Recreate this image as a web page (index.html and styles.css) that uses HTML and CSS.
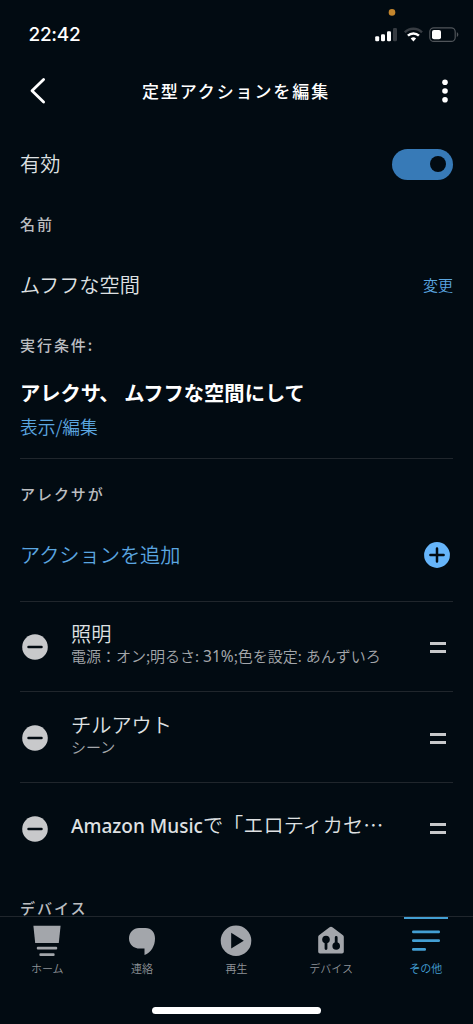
FILE: index.html
```html
<!DOCTYPE html>
<html lang="ja">
<head>
<meta charset="utf-8">
<title>定型アクションを編集</title>
<link rel="stylesheet" href="styles.css">
</head>
<body>
<div class="screen">
  <div class="status">
    <span class="time">22:42</span>
    <svg class="status-icons" width="96" height="48" viewBox="0 0 96 48">
      <circle cx="23" cy="12.4" r="3.3" fill="#c4862d"/>
      <g fill="#fff">
        <rect x="6.2" y="36.3" width="4" height="5" rx="1.2"/>
        <rect x="12" y="34.2" width="4" height="7.1" rx="1.2"/>
        <rect x="18" y="31.2" width="4" height="10.1" rx="1.2"/>
        <rect x="24" y="28" width="4" height="13.3" rx="1.2" fill="#373c42"/>
      </g>
      <g fill="none" stroke-width="2.5">
        <path d="M35.8 32.3a12.4 12.4 0 0 1 17.2 0" stroke="#373c42"/>
        <path d="M38.9 35.7a8 8 0 0 1 11 0" stroke="#fff"/>
      </g>
      <path d="M44.4 41.4l-2.7-2.8a4 4 0 0 1 5.4 0z" fill="#fff"/>
      <rect x="60.8" y="27.8" width="25.4" height="13.6" rx="4" fill="none" stroke="#50555a" stroke-width="1.2"/>
      <rect x="63" y="30" width="9" height="9.2" rx="2" fill="#fff"/>
      <path d="M87.8 32.3c2 .6 2 4 0 4.6z" fill="#50555a"/>
    </svg>
  </div>

  <header class="header">
    <svg width="18" height="30" viewBox="0 0 18 30" fill="none" stroke="#fff" stroke-width="2.8" stroke-linecap="round" stroke-linejoin="round"><path d="M15.6 3.500L4 14.800L15.6 26"/></svg>
    <h1 class="title">定型アクションを編集</h1>
    <svg width="8" height="26" viewBox="0 0 8 26" fill="#fff"><circle cx="4" cy="4.2" r="2.8"/><circle cx="4" cy="13" r="2.8"/><circle cx="4" cy="21.8" r="2.8"/></svg>
  </header>

  <main class="content">
    <section class="row row-enabled">
      <span class="text">有効</span>
      <span class="toggle"><span class="knob"></span></span>
    </section>
    <h2 class="label label-name">名前</h2>
    <section class="row row-name">
      <span class="text">ムフフな空間</span>
      <a class="change">変更</a>
    </section>
    <h2 class="label label-when">実行条件:</h2>
    <section class="trigger">
      <p class="phrase">アレクサ、 ムフフな空間にして</p>
      <a class="edit">表示/編集</a>
    </section>
    <h2 class="label label-alexa">アレクサが</h2>
    <section class="row row-add">
      <a class="text link">アクションを追加</a>
      <svg width="30" height="30" viewBox="0 0 30 30"><circle cx="15" cy="15" r="12.9" fill="#66b5fa"/><path d="M8.4 15h13.2M15 8.4v13.2" stroke="#020b12" stroke-width="2.5" stroke-linecap="round"/></svg>
    </section>
    <section class="action">
      <svg class="minus" width="30" height="30" viewBox="0 0 30 30"><circle cx="15" cy="15" r="12.8" fill="#c8c9cb"/><path d="M8.5 15h13" stroke="#020b12" stroke-width="2.5" stroke-linecap="round"/></svg>
      <div class="info"><p class="text">照明</p><p class="sub">電源：オン;明るさ: <span class="num">31%</span>;色を設定: あんずいろ</p></div>
      <span class="handle"></span>
    </section>
    <section class="action">
      <svg class="minus" width="30" height="30" viewBox="0 0 30 30"><circle cx="15" cy="15" r="12.8" fill="#c8c9cb"/><path d="M8.5 15h13" stroke="#020b12" stroke-width="2.5" stroke-linecap="round"/></svg>
      <div class="info"><p class="text">チルアウト</p><p class="sub">シーン</p></div>
      <span class="handle"></span>
    </section>
    <section class="action last">
      <svg class="minus" width="30" height="30" viewBox="0 0 30 30"><circle cx="15" cy="15" r="12.8" fill="#c8c9cb"/><path d="M8.5 15h13" stroke="#020b12" stroke-width="2.5" stroke-linecap="round"/></svg>
      <div class="info"><p class="text"><span class="latin">Amazon Music</span>で「エロティカセ…</p></div>
      <span class="handle"></span>
    </section>
    <h2 class="label label-device">デバイス</h2>
  </main>

  <nav class="tabs">
    <a class="tab">
      <svg width="32" height="36" viewBox="0 0 32 36" fill="#a3a6ab"><path d="M2.4 1.8h27.2L27.8 19H4.2z"/><rect x="5.8" y="22.8" width="20.4" height="2.7" rx="1"/><rect x="8.4" y="29.2" width="15.2" height="2.7" rx="1"/></svg>
      <span>ホーム</span>
    </a>
    <a class="tab">
      <svg width="32" height="36" viewBox="0 0 32 36" fill="#a3a6ab"><path d="M13 4h6.500c6 0 9.500 4.500 9.500 10.500C29 22 25 28.500 18.500 31V24.600H14C7.500 24.600 3 20.500 3 14.500S7.500 4 13 4z"/></svg>
      <span>連絡</span>
    </a>
    <a class="tab">
      <svg width="32" height="36" viewBox="0 0 32 36"><circle cx="16" cy="16.700" r="15.300" fill="#a3a6ab"/><path d="M11.200 8.800L23.800 16.700L11.200 24.600z" fill="#020b12"/></svg>
      <span>再生</span>
    </a>
    <a class="tab">
      <svg width="32" height="36" viewBox="0 0 32 36"><path d="M14.200 3.400q1.800-1.400 3.600 0L28 11.200q.8.700.8 1.700V27.700q0 1.800-1.800 1.800H5q-1.800 0-1.800-1.800V12.900q0-1 .8-1.700z" fill="#a3a6ab"/><g fill="#020b12"><circle cx="11" cy="15.500" r="3.800"/><circle cx="21.200" cy="22" r="3.800"/></g><path d="M11 15v9.500M21.200 22v-8.500" stroke="#020b12" stroke-width="2.800" stroke-linecap="round"/></svg>
      <span>デバイス</span>
    </a>
    <a class="tab active">
      <svg width="32" height="36" viewBox="0 0 32 36" fill="#439fd3"><rect x="2" y="6.500" width="28" height="2.800" rx="1.200"/><rect x="2" y="15.200" width="28" height="2.800" rx="1.200"/><rect x="2" y="24" width="14" height="2.800" rx="1.200"/></svg>
      <span>その他</span>
    </a>
  </nav>
  <div class="home-area"><div class="home-bar"></div></div>
</div>
</body>
</html>
```
FILE: styles.css
```css
* { box-sizing: border-box; margin: 0; padding: 0; }
body { background: #020b12; color: #dfe1e3; font-family: "Noto Sans CJK JP", sans-serif; }
.screen { width: 473px; height: 1024px; overflow: hidden; display: flex; flex-direction: column; }
.screen svg { display: block; flex: none; }
.status { height: 60px; flex: none; display: flex; justify-content: space-between; padding: 0 8px 0 28.5px; }
.time { font: 500 19px/70px Inter, sans-serif; letter-spacing: -0.3px; color: #fff; }
.header { height: 62px; flex: none; display: flex; align-items: center; justify-content: space-between; padding: 0 24px 0 28px; }
.title { font-size: 17px; font-weight: 500; letter-spacing: 1.9px; line-height: 60px; color: #fff; margin-right: 15px; }
.content { height: 794px; flex: none; padding: 0 20px; }
.row { display: flex; align-items: center; justify-content: space-between; }
.text { font-size: 20.2px; font-weight: 350; line-height: 28px; white-space: nowrap; }
.row-enabled { height: 84px; }
.toggle { width: 61px; height: 31px; border-radius: 16px; background: #377ab7; display: flex; align-items: center; justify-content: flex-end; padding-right: 7px; }
.knob { width: 16px; height: 16px; border-radius: 50%; background: #020b12; }
.label { font-size: 15px; font-weight: 500; letter-spacing: 1.95px; color: #bcbec1; line-height: 22px; }
.label-name { margin-top: 7px; }
.row-name { height: 98px; padding-top: 1px; }
.change { font-size: 15px; font-weight: 350; color: #5ba6e0; }
.label-when { margin-top: 1px; }
.trigger { height: 103px; border-bottom: 1px solid #20262c; padding-top: 22px; }
.phrase { font-size: 20.3px; font-weight: 700; line-height: 28px; color: #fff; }
.edit { display: block; margin-top: 7px; font-size: 17.7px; font-weight: 350; line-height: 26px; color: #5ba6e0; }
.label-alexa { margin-top: 24px; }
.row-add { height: 95.6px; padding: 5px 0 0; }
.link { color: #5ba6e0; }
.row-add svg { margin-right: 1px; }
.action { height: 90.8px; border-top: 1px solid #20262c; display: flex; align-items: center; padding-top: 1.6px; }
.minus { margin-right: 21px; }
.info { flex: 1; min-width: 0; padding-bottom: 11px; }
.last .info { padding-bottom: 7px; }
.sub { font-size: 15px; font-weight: 350; line-height: 16px; color: #a4a7ab; white-space: nowrap; word-spacing: 0.6px; }
.num { font-family: "Noto Sans", sans-serif; font-size: 15.5px; font-weight: 400; }
.latin { font-family: "Noto Sans", sans-serif; font-size: 19px; font-weight: 500; }
.handle { width: 16px; height: 11px; margin-right: 7px; border: solid #c8c9cb; border-width: 3px 0; }
.label-device { margin-top: 24px; }
.tabs { height: 66px; flex: none; border-top: 1px solid #20262c; display: grid; grid-template-columns: repeat(5, 94.6px); }
.tab { display: flex; flex-direction: column; align-items: center; padding-top: 7px; font-size: 11px; font-weight: 350; line-height: 16px; color: #8f9398; }
.active { color: #439fd3; background: linear-gradient(#439fd3, #439fd3) center top / 44px 2px no-repeat; }
.home-area { flex: 1; display: flex; justify-content: center; align-items: flex-start; padding-top: 25px; }
.home-bar { width: 169px; height: 7px; border-radius: 4px; background: #fff; }
```
